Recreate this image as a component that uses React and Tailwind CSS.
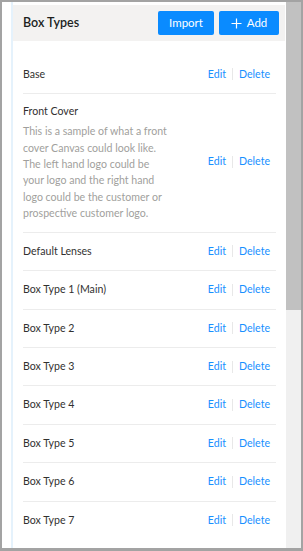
import React from "react";

const rows = [
  "Default Lenses",
  "Box Type 1 (Main)",
  "Box Type 2",
  "Box Type 3",
  "Box Type 4",
  "Box Type 5",
  "Box Type 6",
  "Box Type 7",
];

function Actions() {
  return (
    <div className="flex items-center pr-[6px] text-[#1890ff] shrink-0">
      <span>Edit</span>
      <span className="mx-[6px] h-[12px] w-px bg-[#e8e8e8]" />
      <span>Delete</span>
    </div>
  );
}

function Row({ name, last }) {
  return (
    <div
      className={
        last
          ? "flex items-center justify-between py-[10px] leading-[17.4px]"
          : "flex items-center justify-between py-[10px] leading-[17.4px] border-b border-[#ececec]"
      }
    >
      <span className="text-[#323130]">{name}</span>
      <Actions />
    </div>
  );
}

export default function App() {
  return (
    <div
      className="w-[303px] h-[551px] flex bg-white border-t-2 border-l-2 border-r-2 border-b-[3px] border-[#a3a3a3] overflow-hidden"
      style={{ fontFamily: "Lato, 'Noto Sans', sans-serif" }}
    >
      <div className="w-[9px] shrink-0 bg-white" />
      <div className="w-[2px] shrink-0 bg-[#e5f2fc]" />
      <div className="flex-1 min-w-0 pt-[3px] overflow-hidden">
        <div className="h-[36px] bg-[#f3f2f1] flex items-center justify-between pl-[10px] pr-[6px]">
          <span className="text-[12.5px] font-semibold text-[#201f1e]">Box Types</span>
          <div className="flex items-center gap-[5px] text-[11.5px] text-white">
            <button className="w-[56px] h-[24px] rounded-[2px] bg-[#0a8bff] flex items-center justify-center">
              Import
            </button>
            <button className="w-[60px] h-[24px] rounded-[2px] bg-[#0a8bff] flex items-center justify-center gap-[5px]">
              <svg width="11" height="11" viewBox="0 0 11 11" fill="none" stroke="white" strokeWidth="1.2">
                <path d="M5.5 0.5v10M0.5 5.5h10" />
              </svg>
              <span>Add</span>
            </button>
          </div>
        </div>
        <div className="pt-[14.6px] pl-[10px] pr-[9px] text-[10.6px]">
          <Row name="Base" />
          <div className="flex items-center justify-between pt-[9px] pb-[10.5px] border-b border-[#ececec]">
            <div>
              <div className="leading-[17.4px] text-[#323130]">Front Cover</div>
              <div className="mt-[3px] leading-[16.3px] text-[#a19f9d]">
                This is a sample of what a front
                <br />
                cover Canvas could look like.
                <br />
                The left hand logo could be
                <br />
                your logo and the right hand
                <br />
                logo could be the customer or
                <br />
                prospective customer logo.
              </div>
            </div>
            <Actions />
          </div>
          {rows.map((r, i) => (
            <Row key={r} name={r} last={i === rows.length - 1} />
          ))}
        </div>
      </div>
      <div className="w-px shrink-0 bg-white" />
      <div className="w-[15px] shrink-0 bg-[#f0f0f0] flex flex-col">
        <div className="h-[308px] bg-[#c1c1c1]" />
      </div>
    </div>
  );
}
